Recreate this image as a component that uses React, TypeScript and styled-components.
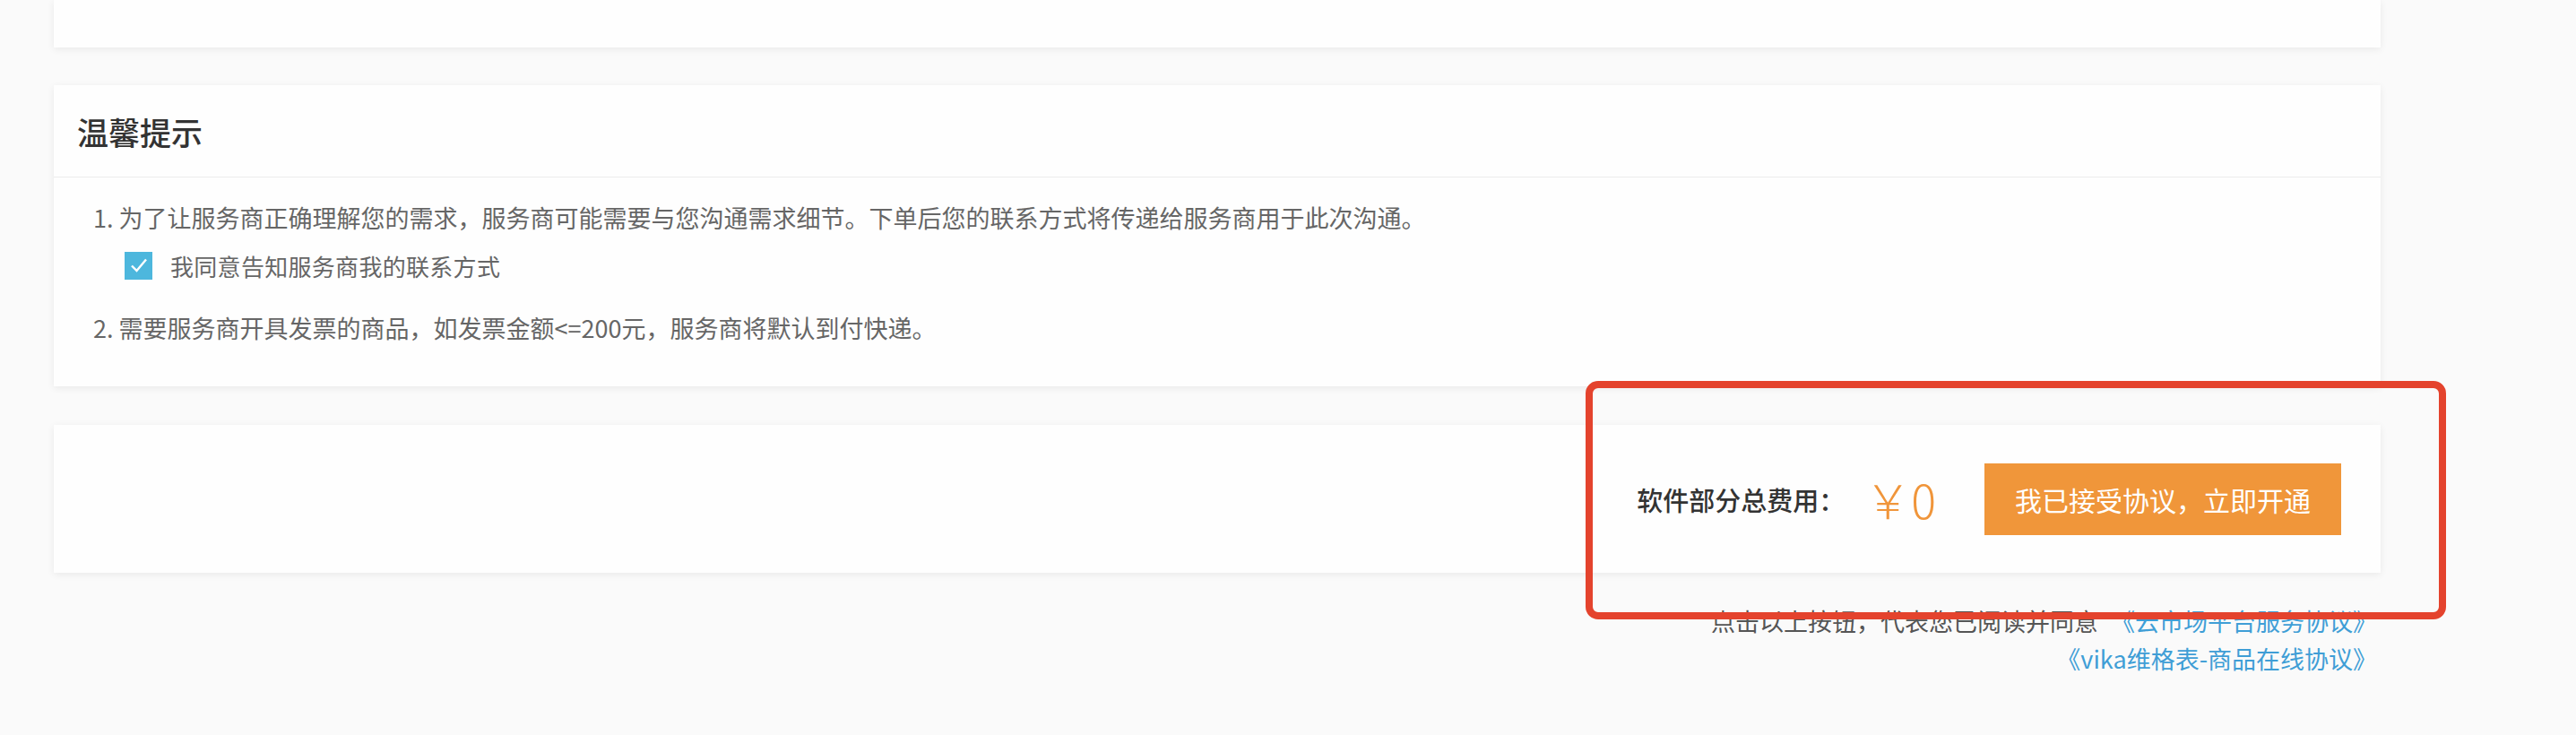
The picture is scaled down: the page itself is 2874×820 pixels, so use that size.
import React, { FC } from 'react';
import styled, { createGlobalStyle } from 'styled-components';

const GlobalStyle = createGlobalStyle`
  html, body {
    margin: 0;
    padding: 0;
    background: #fafafa;
    font-family: "Noto Sans CJK SC", "Noto Sans", "Liberation Sans", sans-serif;
  }
`;

const Page = styled.div`
  position: relative;
  width: 2874px;
  height: 820px;
  overflow: hidden;
  padding-left: 60px;
  box-sizing: border-box;
`;

const Column = styled.div`
  width: 2596px;
  display: flex;
  flex-direction: column;
`;

const Card = styled.div<{ $height?: number; $gap?: number }>`
  background: #fefefe;
  box-shadow: 0 2px 8px rgba(0, 0, 0, 0.07);
  margin-top: ${(p) => p.$gap ?? 0}px;
  ${(p) => (p.$height ? `height: ${p.$height}px;` : '')}
`;

const CardHeader = styled.div`
  height: 102px;
  border-bottom: 1px solid #ececec;
  display: flex;
  align-items: center;
  padding: 0 26px;
`;

const Title = styled.h3`
  margin: 0;
  font-size: 35px;
  font-weight: 500;
  color: #333;
`;

const CardBody = styled.div`
  padding: 25px 26px 45px;
  display: flex;
  flex-direction: column;
`;

const Item = styled.p<{ $gap?: number }>`
  margin: ${(p) => p.$gap ?? 0}px 0 0;
  padding-left: 18px;
  font-size: 27px;
  line-height: 40px;
  color: #666;
`;

const CheckRow = styled.label`
  margin-top: 14px;
  padding-left: 53px;
  height: 38px;
  display: flex;
  align-items: center;
  gap: 20px;
  font-size: 26px;
  letter-spacing: 0.3px;
  color: #666;
`;

const CheckBox = styled.span`
  width: 31px;
  height: 31px;
  background: #4db7dd;
  display: flex;
  align-items: center;
  justify-content: center;
`;

const PayBar = styled.div`
  height: 165px;
  display: flex;
  align-items: center;
  justify-content: flex-end;
  padding-right: 44px;
`;

const TotalLabel = styled.span`
  font-size: 29px;
  font-weight: 500;
  color: #333;
`;

const Price = styled.span`
  margin-left: 22px;
  margin-right: 54px;
  font-size: 52px;
  font-weight: 300;
  color: #f0953a;
  line-height: 1;
`;

const OpenButton = styled.button`
  width: 398px;
  height: 80px;
  border: none;
  background: #f0963a;
  color: #fff;
  font-family: inherit;
  font-size: 30px;
  cursor: pointer;
`;

const Footer = styled.div`
  margin-top: 33px;
  padding-right: 4px;
  text-align: right;
  font-size: 27px;
  line-height: 42px;
  color: #555;
`;

const Link = styled.a`
  color: #3f9ed6;
  text-decoration: none;
  margin-left: 14px;
`;

const Highlight = styled.div`
  position: absolute;
  left: 1769px;
  top: 425px;
  width: 960px;
  height: 266px;
  box-sizing: border-box;
  border: 8px solid #e4432d;
  border-radius: 14px;
  pointer-events: none;
`;

const Check: FC = () => (
  <svg width="20" height="18" viewBox="0 0 20 18">
    <path d="M2 9.5 L7.5 15 L18 2.5" fill="none" stroke="#fff" strokeWidth="2.4" />
  </svg>
);

export default function App() {
  return (
    <>
      <GlobalStyle />
      <Page>
        <Column>
          <Card $height={53} />
          <Card $gap={42}>
            <CardHeader>
              <Title>温馨提示</Title>
            </CardHeader>
            <CardBody>
              <Item>
                1. 为了让服务商正确理解您的需求，服务商可能需要与您沟通需求细节。下单后您的联系方式将传递给服务商用于此次沟通。
              </Item>
              <CheckRow>
                <CheckBox>
                  <Check />
                </CheckBox>
                我同意告知服务商我的联系方式
              </CheckRow>
              <Item $gap={31}>
                2. 需要服务商开具发票的商品，如发票金额&lt;=200元，服务商将默认到付快递。
              </Item>
            </CardBody>
          </Card>
          <Card $gap={43}>
            <PayBar>
              <TotalLabel>软件部分总费用：</TotalLabel>
              <Price>￥0</Price>
              <OpenButton>我已接受协议，立即开通</OpenButton>
            </PayBar>
          </Card>
          <Footer>
            点击以上按钮，代表您已阅读并同意
            <Link href="#">《云市场平台服务协议》</Link>
            <br />
            <Link href="#">《vika维格表-商品在线协议》</Link>
          </Footer>
        </Column>
        <Highlight />
      </Page>
    </>
  );
}
